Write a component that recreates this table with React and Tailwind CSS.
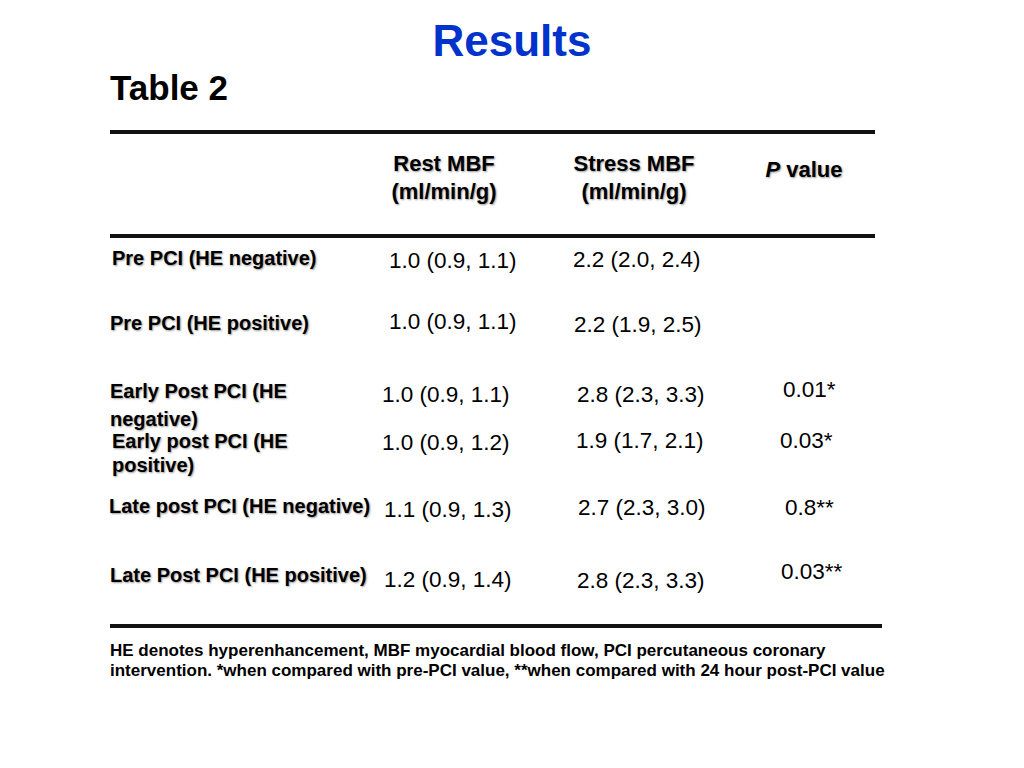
const rows = [
  {
    h: "h-[64px]",
    label: ["Pre PCI (HE negative)"],
    labelCls: "ml-[2px] mt-0 leading-[24px]",
    v1: "1.0 (0.9, 1.1)",
    v1Cls: "ml-[9px] mt-[3px]",
    v2: "2.2 (2.0, 2.4)",
    v2Cls: "ml-[3px] mt-[2px]",
    p: "",
    pCls: "",
  },
  {
    h: "h-[67px]",
    label: ["Pre PCI (HE positive)"],
    labelCls: "ml-0 mt-[1px] leading-[24px]",
    v1: "1.0 (0.9, 1.1)",
    v1Cls: "ml-[9px] mt-0",
    v2: "2.2 (1.9, 2.5)",
    v2Cls: "ml-[4px] mt-[3px]",
    p: "",
    pCls: "",
  },
  {
    h: "h-[52px]",
    label: ["Early Post PCI (HE", "negative)"],
    labelCls: "ml-0 mt-0 leading-[28px]",
    v1: "1.0 (0.9, 1.1)",
    v1Cls: "ml-[2px] mt-[6px]",
    v2: "2.8 (2.3, 3.3)",
    v2Cls: "ml-[7px] mt-[6px]",
    p: "0.01*",
    pCls: "ml-[13px] mt-[1px]",
  },
  {
    h: "h-[65px]",
    label: ["Early post PCI (HE", "positive)"],
    labelCls: "ml-[2px] mt-0 leading-[24px]",
    v1: "1.0 (0.9, 1.2)",
    v1Cls: "ml-[2px] mt-[2px]",
    v2: "1.9 (1.7, 2.1)",
    v2Cls: "ml-[6px] mt-0",
    p: "0.03*",
    pCls: "ml-[10px] mt-0",
  },
  {
    h: "h-[66px]",
    label: ["Late post PCI (HE negative)"],
    labelCls: "-ml-px mt-0 leading-[24px]",
    v1: "1.1 (0.9, 1.3)",
    v1Cls: "ml-[4px] mt-[4px]",
    v2: "2.7 (2.3, 3.0)",
    v2Cls: "ml-[8px] mt-[2px]",
    p: "0.8**",
    pCls: "ml-[15px] mt-[2px]",
  },
  {
    h: "h-[64px]",
    label: ["Late Post PCI (HE positive)"],
    labelCls: "ml-0 mt-[3px] leading-[24px]",
    v1: "1.2 (0.9, 1.4)",
    v1Cls: "ml-[4px] mt-[8px]",
    v2: "2.8 (2.3, 3.3)",
    v2Cls: "ml-[7px] mt-[9px]",
    p: "0.03**",
    pCls: "ml-[11px] mt-0",
  },
];

function Rule({ w }) {
  return <div className={`ml-[110px] h-[4px] bg-[#111] ${w}`} />;
}

export default function App() {
  return (
    <div className="w-[1024px] h-[768px] bg-white overflow-hidden font-['Liberation_Sans',Arial,sans-serif] text-black">
      {/* Title */}
      <div className="pt-[16px] text-center text-[44px] leading-[50px] font-bold text-[#0033cc]">
        Results
      </div>
      <div className="mt-[2px] pl-[110px] text-[35px] leading-[40px] font-bold">Table 2</div>

      <div className="mt-[22px]">
        <Rule w="w-[765px]" />
      </div>

      {/* Header */}
      <div className="mt-[16px] ml-[110px] flex items-start text-[22px] leading-[28px] font-bold [text-shadow:1px_1px_2px_rgba(0,0,0,0.4)]">
        <div className="w-[270px]" />
        <div className="w-[128px] text-center">
          Rest MBF
          <br />
          (ml/min/g)
        </div>
        <div className="w-[252px] text-center">
          Stress MBF
          <br />
          (ml/min/g)
        </div>
        <div className="w-[88px] mt-[6px] text-center whitespace-nowrap">
          <i>P</i> value
        </div>
      </div>

      <div className="mt-[28px]">
        <Rule w="w-[765px]" />
      </div>

      {/* Rows */}
      <div className="mt-[8px] ml-[110px]">
        {rows.map((r, i) => (
          <div key={i} className={`flex items-start ${r.h}`}>
            <div className="w-[270px] shrink-0">
              <div
                className={`text-[20px] font-bold whitespace-nowrap [text-shadow:1px_1px_2px_rgba(0,0,0,0.4)] ${r.labelCls}`}
              >
                {r.label.map((l, j) => (
                  <div key={j}>{l}</div>
                ))}
              </div>
            </div>
            <div className="w-[190px] shrink-0">
              <div className={`text-[22.5px] leading-[24px] whitespace-nowrap ${r.v1Cls}`}>{r.v1}</div>
            </div>
            <div className="w-[200px] shrink-0">
              <div className={`text-[22.5px] leading-[24px] whitespace-nowrap ${r.v2Cls}`}>{r.v2}</div>
            </div>
            <div className="shrink-0">
              <div className={`text-[22.5px] leading-[24px] whitespace-nowrap ${r.pCls}`}>{r.p}</div>
            </div>
          </div>
        ))}
      </div>

      <Rule w="w-[772px]" />

      {/* Footnote */}
      <div className="mt-[13px] ml-[110px] text-[17px] leading-[20px] font-bold">
        <div>HE denotes hyperenhancement, MBF myocardial blood flow, PCI percutaneous coronary</div>
        <div>intervention. *when compared with pre-PCI value, **when compared with 24 hour post-PCI value</div>
      </div>
    </div>
  );
}
